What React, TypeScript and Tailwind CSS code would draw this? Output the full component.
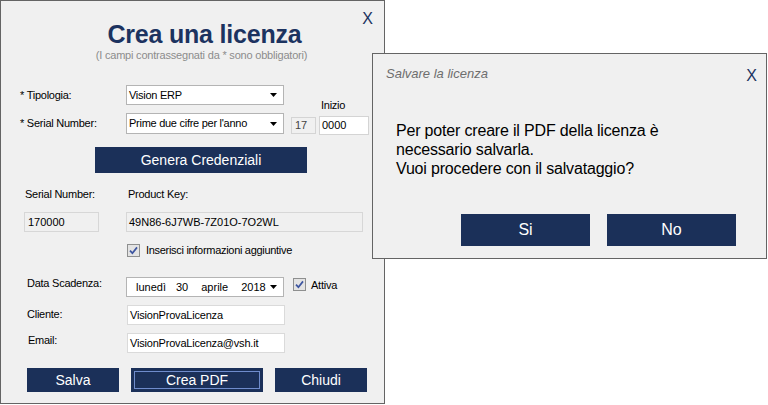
import React from "react";

const font = "font-['Liberation_Sans',Arial,sans-serif]";

function Arrow() {
  return (
    <svg width="7" height="4" viewBox="0 0 7 4" className="shrink-0">
      <path d="M0 0 H7 L3.5 4 Z" fill="#000" />
    </svg>
  );
}

function Check() {
  return (
    <svg width="13" height="13" viewBox="0 0 13 13" className="shrink-0">
      <rect x="0.5" y="0.5" width="12" height="12" fill="#e3e3e3" stroke="#8e8f8f" />
      <path d="M3 6.6 L5.4 9.2 L10 3.4" stroke="#3d55a0" strokeWidth="1.7" fill="none" />
    </svg>
  );
}

function Combo({ text, h = 20 }: { text: string; h?: number }) {
  return (
    <div
      className="w-[158px] bg-white border border-[#b4b4b4] flex items-center justify-between pl-[2px] pr-[6px] text-[11px] tracking-[-0.27px] text-black"
      style={{ height: h }}
    >
      <span>{text}</span>
      <Arrow />
    </div>
  );
}

export default function App() {
  return (
    <div className={`relative w-[768px] h-[405px] bg-white overflow-hidden ${font}`}>
      {/* main window */}
      <div className="absolute left-0 top-0 w-[385px] h-[404px] border border-[#646464] bg-[#f0f0f0] flex flex-col">
        <div className="absolute right-[11px] top-[8px] text-[16px] leading-[19px] text-[#1c3360]">X</div>
        <div className="mt-[19px] pl-[24px] text-center text-[25px] leading-[29px] font-bold tracking-[-0.2px] text-[#1c3360]">
          Crea una licenza
        </div>
        <div className="pl-[18px] text-center text-[11px] leading-[13px] tracking-[-0.2px] text-[#8c8c8c]">
          (I campi contrassegnati da * sono obbligatori)
        </div>

        {/* Tipologia */}
        <div className="mt-[23px] pl-[19px] flex items-center h-[20px]">
          <div className="w-[106px] text-[11px] leading-[13px] tracking-[-0.25px] text-black">* Tipologia:</div>
          <Combo text="Vision ERP" />
        </div>

        {/* Serial Number */}
        <div className="mt-[8px] pl-[19px] flex items-start h-[21px]">
          <div className="w-[106px] h-[21px] flex items-center text-[11px] leading-[13px] tracking-[-0.25px] text-black">* Serial Number:</div>
          <Combo text="Prime due cifre per l'anno" h={21} />
          <div className="ml-[7px] mt-[4px] w-[25px] h-[17px] border border-[#d4d4d4] bg-[#f0f0f0] flex items-center pl-[3px] text-[11px] text-[#444]">
            17
          </div>
          <div className="ml-[3px] -mt-[14px] flex flex-col">
            <div className="pl-[2px] text-[11px] leading-[13px] tracking-[-0.25px] text-black">Inizio</div>
            <div className="mt-[4px] w-[50px] h-[19px] border border-[#d4d4d4] bg-white flex items-center pl-[2px] text-[11px] text-black">
              0000
            </div>
          </div>
        </div>

        {/* Genera */}
        <div className="mt-[13px] ml-[94px] w-[212px] h-[26px] bg-[#1b3059] text-white text-[14px] flex items-center justify-center">
          Genera Credenziali
        </div>

        {/* labels */}
        <div className="mt-[15px] pl-[24px] flex text-[11px] leading-[13px] tracking-[-0.25px] text-black">
          <div className="w-[103px]">Serial Number:</div>
          <div>Product Key:</div>
        </div>

        {/* outputs */}
        <div className="mt-[11px] pl-[23px] flex">
          <div className="w-[75px] h-[20px] border border-[#d7d7d7] bg-[#f0f0f0] flex items-center pl-[3px] text-[11px] text-black">
            170000
          </div>
          <div className="ml-[27px] w-[237px] h-[20px] border border-[#d7d7d7] bg-[#f0f0f0] flex items-center pl-[2px] text-[11px] text-black">
            49N86-6J7WB-7Z01O-7O2WL
          </div>
        </div>

        {/* checkbox */}
        <div className="mt-[12px] pl-[126px] flex items-start">
          <Check />
          <div className="ml-[6px] text-[11px] leading-[13px] tracking-[-0.3px] text-black">Inserisci informazioni aggiuntive</div>
        </div>

        {/* Data scadenza */}
        <div className="mt-[20px] pl-[26px] flex items-start">
          <div className="w-[99px] text-[11px] leading-[13px] tracking-[-0.25px] text-black">Data Scadenza:</div>
          <div className="w-[158px] h-[20px] bg-white border border-[#b4b4b4] flex items-center text-[11px] text-black pr-[6px]">
            <span className="ml-[9px]">lunedì</span>
            <span className="ml-[10px]">30</span>
            <span className="ml-[13px]">aprile</span>
            <span className="ml-[13px]">2018</span>
            <span className="ml-auto"><Arrow /></span>
          </div>
          <div className="ml-[9px] mt-[1px]"><Check /></div>
          <div className="ml-[5px] mt-[2px] text-[11px] leading-[13px] tracking-[-0.25px] text-black">Attiva</div>
        </div>

        {/* Cliente */}
        <div className="mt-[8px] pl-[26px] flex items-start">
          <div className="w-[100px] pt-[3px] text-[11px] leading-[13px] tracking-[-0.25px] text-black">Cliente:</div>
          <div className="w-[158px] h-[20px] bg-white border border-[#dadada] flex items-center pl-[2px] text-[11px] tracking-[-0.2px] text-black">
            VisionProvaLicenza
          </div>
        </div>

        {/* Email */}
        <div className="mt-[8px] pl-[27px] flex items-start">
          <div className="w-[99px] pt-[1px] text-[11px] leading-[13px] tracking-[-0.25px] text-black">Email:</div>
          <div className="w-[158px] h-[20px] bg-white border border-[#dadada] flex items-center pl-[2px] text-[11px] tracking-[-0.2px] text-black">
            VisionProvaLicenza@vsh.it
          </div>
        </div>

        {/* buttons */}
        <div className="mt-[15px] pl-[26px] flex text-[14px] text-white">
          <div className="w-[92px] h-[24px] bg-[#1b3059] flex items-center justify-center">Salva</div>
          <div className="ml-[12px] w-[132px] h-[24px] bg-[#1b3059] p-[3px]">
            <div className="w-full h-full border border-[#6f8ccc] flex items-center justify-center">Crea PDF</div>
          </div>
          <div className="ml-[12px] w-[92px] h-[24px] bg-[#1b3059] flex items-center justify-center">Chiudi</div>
        </div>
      </div>

      {/* dialog */}
      <div className="absolute left-[372px] top-[53px] w-[395px] h-[206px] border border-[#646464] bg-[#f0f0f0] flex flex-col">
        <div className="mt-[12px] pl-[13px] pr-[9px] flex items-start justify-between">
          <div className="italic text-[13px] leading-[15px] text-[#6e6e6e]">Salvare la licenza</div>
          <div className="text-[16px] leading-[19px] text-[#1c3360]">X</div>
        </div>
        <div className="mt-[36px] pl-[23px] text-[16px] leading-[19px] tracking-[-0.18px] text-black">
          <div>Per poter creare il PDF della licenza è</div>
          <div>necessario salvarla.</div>
          <div>Vuoi procedere con il salvataggio?</div>
        </div>
        <div className="mt-[36px] pl-[88px] flex gap-[17px] text-[16px] text-white">
          <div className="w-[129px] h-[32px] bg-[#1b3059] flex items-center justify-center">Si</div>
          <div className="w-[129px] h-[32px] bg-[#1b3059] flex items-center justify-center">No</div>
        </div>
      </div>
    </div>
  );
}
